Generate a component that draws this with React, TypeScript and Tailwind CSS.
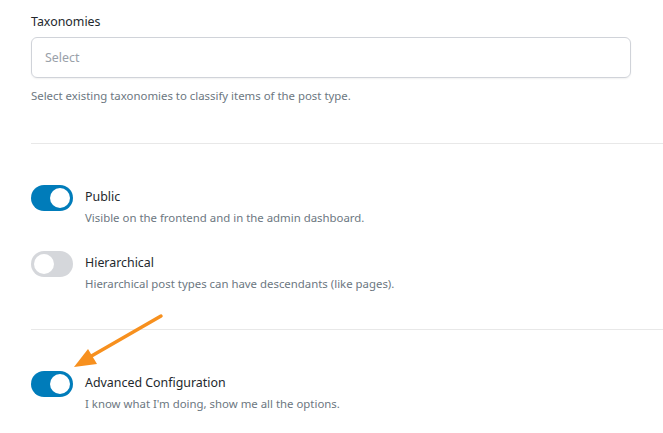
import React from "react";

function Toggle({ on }: { on: boolean }) {
  return (
    <div
      className={
        "w-[42px] h-[26px] rounded-full p-[3px] flex shrink-0 " +
        (on ? "bg-[#007cba] justify-end" : "bg-[#d5d7db] justify-start")
      }
    >
      <div className="w-[20px] h-[20px] rounded-full bg-white" />
    </div>
  );
}

function ToggleRow({ on, title, desc }: { on: boolean; title: string; desc: string }) {
  return (
    <div className="flex items-start gap-[12px]">
      <div className="pt-[1px]">
        <Toggle on={on} />
      </div>
      <div className="flex flex-col">
        <div className="text-[12.4px] leading-[26px] text-[#23282d]">{title}</div>
        <div className="text-[11.4px] leading-[14px] text-[#6c7781] mt-[1px]">{desc}</div>
      </div>
    </div>
  );
}

export default function App() {
  return (
    <div
      className="relative w-[663px] h-[433px] bg-white overflow-hidden pl-[31px]"
      style={{ fontFamily: '"Noto Sans", "Open Sans", sans-serif' }}
    >
      <div className="pt-[13px]">
        <div className="text-[12.4px] leading-[18px] text-[#23282d]">Taxonomies</div>
        <div className="mt-[6px] w-[600px] h-[41px] rounded-[6px] border border-[#d0d3d9] shadow-[0_1px_2px_rgba(0,0,0,0.06)] flex items-center px-[13px]">
          <span className="text-[12.4px] text-[#9aa1a9] mt-[1px]">Select</span>
        </div>
        <div className="mt-[10px] text-[11.4px] leading-[16px] text-[#6c7781]">
          Select existing taxonomies to classify items of the post type.
        </div>
      </div>
      <div className="mt-[39px] h-px bg-[#e8e8e8]" />
      <div className="pt-[40px] flex flex-col gap-[25px]">
        <ToggleRow on title="Public" desc="Visible on the frontend and in the admin dashboard." />
        <ToggleRow
          on={false}
          title="Hierarchical"
          desc="Hierarchical post types can have descendants (like pages)."
        />
      </div>
      <div className="mt-[38px] h-px bg-[#e8e8e8]" />
      <div className="pt-[40px]">
        <ToggleRow on title="Advanced Configuration" desc="I know what I'm doing, show me all the options." />
      </div>
      <svg className="absolute left-0 top-0" width="663" height="433" viewBox="0 0 663 433">
        <line x1="161" y1="316" x2="88" y2="358" stroke="#f7901e" strokeWidth="3.5" strokeLinecap="round" />
        <polygon points="74,367 88,349 97,364" fill="#f7901e" />
      </svg>
    </div>
  );
}
